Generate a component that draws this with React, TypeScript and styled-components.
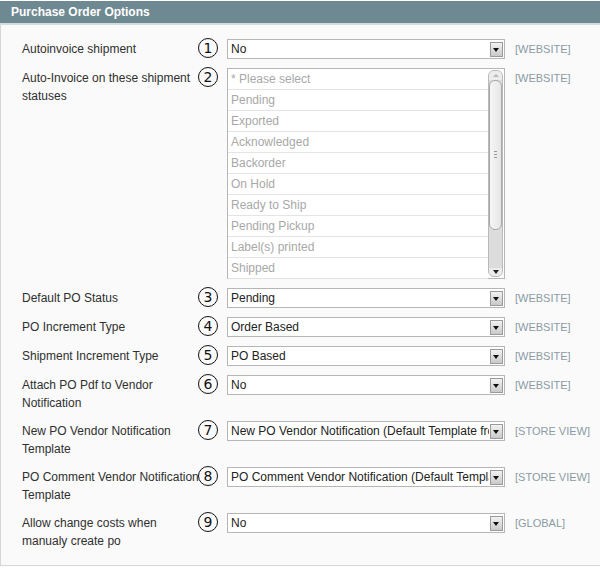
import React from "react";
import styled, { createGlobalStyle } from "styled-components";

type Field = {
  label: string;
  value: string;
  scope: string;
};

const statuses = [
  "* Please select",
  "Pending",
  "Exported",
  "Acknowledged",
  "Backorder",
  "On Hold",
  "Ready to Ship",
  "Pending Pickup",
  "Label(s) printed",
  "Shipped",
];

const fieldsAfter: Field[] = [
  { label: "Default PO Status", value: "Pending", scope: "[WEBSITE]" },
  { label: "PO Increment Type", value: "Order Based", scope: "[WEBSITE]" },
  { label: "Shipment Increment Type", value: "PO Based", scope: "[WEBSITE]" },
  { label: "Attach PO Pdf to Vendor Notification", value: "No", scope: "[WEBSITE]" },
  {
    label: "New PO Vendor Notification Template",
    value: "New PO Vendor Notification (Default Template from Locale)",
    scope: "[STORE VIEW]",
  },
  {
    label: "PO Comment Vendor Notification Template",
    value: "PO Comment Vendor Notification (Default Template from Locale)",
    scope: "[STORE VIEW]",
  },
  { label: "Allow change costs when manualy create po", value: "No", scope: "[GLOBAL]" },
];

const App = () => {
  return (
    <>
      <GlobalStyle />
      <Section>
        <Head>Purchase Order Options</Head>
        <Body>
          <Row>
            <Label>Autoinvoice shipment</Label>
            <Value>
              <Badge>1</Badge>
              <Select>
                <SelectText>No</SelectText>
                <Arrow />
              </Select>
            </Value>
            <Scope>[WEBSITE]</Scope>
          </Row>
          <Row>
            <Label>Auto-Invoice on these shipment statuses</Label>
            <Value>
              <Badge>2</Badge>
              <MultiSelect>
                <Options>
                  {statuses.map((s) => (
                    <Option key={s}>{s}</Option>
                  ))}
                </Options>
                <Scrollbar>
                  <ScrollBtn>
                    <UpTri />
                  </ScrollBtn>
                  <Track>
                    <Thumb>
                      <Grip />
                    </Thumb>
                  </Track>
                  <ScrollBtn>
                    <DownTri />
                  </ScrollBtn>
                </Scrollbar>
              </MultiSelect>
            </Value>
            <Scope>[WEBSITE]</Scope>
          </Row>
          {fieldsAfter.map((f, i) => (
            <Row key={f.label}>
              <Label>{f.label}</Label>
              <Value>
                <Badge>{i + 3}</Badge>
                <Select>
                  <SelectText>{f.value}</SelectText>
                  <Arrow />
                </Select>
              </Value>
              <Scope>{f.scope}</Scope>
            </Row>
          ))}
        </Body>
      </Section>
    </>
  );
};

export default App;

const GlobalStyle = createGlobalStyle`
  body {
    margin: 0;
    background: #fff;
    font-family: "Liberation Sans", Arial, sans-serif;
    font-size: 12px;
    color: #2f2f2f;
  }
`;

const Section = styled.div`
  width: 600px;
  height: 566px;
  padding-top: 1px;
  box-sizing: border-box;
  display: flex;
  flex-direction: column;
`;

const Head = styled.div`
  height: 22px;
  line-height: 22px;
  padding-left: 11px;
  background-color: #6f8992;
  color: #fff;
  font-weight: bold;
  font-size: 12px;
  border-bottom: 2px solid #d3dcdf;
`;

const Body = styled.div`
  flex: 1;
  background-color: #fafafa;
  border-left: 1px solid #d6d6d6;
  border-bottom: 1px solid #d6d6d6;
  padding: 10px 0 0 21px;
`;

const Row = styled.div`
  display: flex;
  align-items: flex-start;
  padding: 4px 0 5px;
`;

const Label = styled.div`
  width: 180px;
  flex-shrink: 0;
  line-height: 18px;
  margin-top: 1px;
  color: #2f2f2f;
`;

const Value = styled.div`
  position: relative;
  flex-shrink: 0;
  margin-left: 25px;
  width: 278px;
`;

const Badge = styled.div`
  position: absolute;
  left: -29px;
  top: -1px;
  width: 18px;
  height: 18px;
  border: 1.5px solid #111;
  border-radius: 50%;
  background: #fafafa;
  display: flex;
  align-items: center;
  justify-content: center;
  font-size: 14px;
  font-family: "DejaVu Sans", "Liberation Sans", sans-serif;
  color: #111;
`;

const Select = styled.div`
  position: relative;
  height: 20px;
  box-sizing: border-box;
  border: 1px solid #b6b6b6;
  background: #fff;
  display: flex;
  align-items: center;
  overflow: hidden;
`;

const SelectText = styled.div`
  padding-left: 3px;
  white-space: nowrap;
  overflow: hidden;
  width: 258px;
  color: #222;
  font-size: 12px;
`;

const Arrow = styled.div`
  position: absolute;
  right: 1px;
  top: 2px;
  width: 11px;
  height: 13px;
  border: 1px solid #9a9a9a;
  background: linear-gradient(#f2f2f2, #c9c9c9);
  &::after {
    content: "";
    position: absolute;
    left: 2px;
    top: 5px;
    border-left: 3.5px solid transparent;
    border-right: 3.5px solid transparent;
    border-top: 4px solid #111;
  }
`;

const MultiSelect = styled.div`
  display: flex;
  height: 211px;
  box-sizing: border-box;
  border: 1px solid #b6b6b6;
  background: #fff;
`;

const Options = styled.div`
  flex: 1;
`;

const Option = styled.div`
  height: 21px;
  line-height: 20px;
  box-sizing: border-box;
  padding-left: 3px;
  border-bottom: 1px solid #e4e4e4;
  color: #a8a8a8;
  font-size: 12px;
`;

const Scrollbar = styled.div`
  width: 13px;
  margin: 1px 1px 1px 0;
  border: 1px solid #b9b9b9;
  border-radius: 6px;
  background: #dcdcdc;
  display: flex;
  flex-direction: column;
  overflow: hidden;
`;

const ScrollBtn = styled.div`
  height: 13px;
  background: #ececec;
  display: flex;
  align-items: center;
  justify-content: center;
`;

const UpTri = styled.div`
  border-left: 3px solid transparent;
  border-right: 3px solid transparent;
  border-bottom: 3px solid #b8b8b8;
`;

const DownTri = styled.div`
  border-left: 3.5px solid transparent;
  border-right: 3.5px solid transparent;
  border-top: 4px solid #222;
`;

const Track = styled.div`
  flex: 1;
  padding-bottom: 38px;
`;

const Thumb = styled.div`
  height: 150px;
  box-sizing: border-box;
  border: 1px solid #a8a8a8;
  border-radius: 6px;
  background: linear-gradient(90deg, #f6f6f6, #e6e6e6);
  display: flex;
  justify-content: center;
  padding-top: 70px;
`;

const Grip = styled.div`
  width: 3px;
  height: 7px;
  background: repeating-linear-gradient(#9a9a9a 0 1px, transparent 1px 3px);
`;

const Scope = styled.div`
  margin-left: 10px;
  white-space: nowrap;
  line-height: 18px;
  margin-top: 1px;
  font-size: 11px;
  color: #8a9ba4;
`;
